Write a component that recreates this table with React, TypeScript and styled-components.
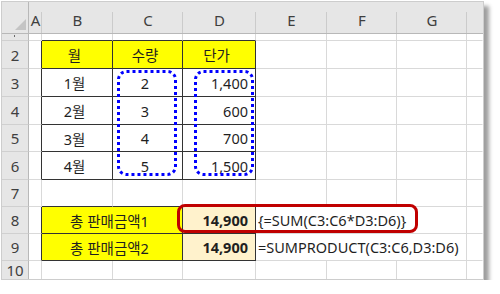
import React from "react";
import styled, { createGlobalStyle } from "styled-components";

const GlobalStyle = createGlobalStyle`
  body {
    margin: 0;
    background: #ffffff;
    font-family: "Noto Sans", "Noto Sans CJK KR", sans-serif;
  }
`;

const COLS = ["A", "B", "C", "D", "E", "F", "G", "H"];
const ROWS = [1, 2, 3, 4, 5, 6, 7, 8, 9, 10];

type Align = "left" | "center" | "right";

type CellSpec = {
  text?: string;
  span?: number;
  align?: Align;
  bg?: string;
  bold?: boolean;
};

const YELLOW = "#ffff00";
const CREAM = "#fff2cc";

// cells keyed by address, everything else is an empty gridline cell
const DATA: Record<string, CellSpec> = {
  B2: { text: "월", align: "center", bg: YELLOW },
  C2: { text: "수량", align: "center", bg: YELLOW },
  D2: { text: "단가", align: "center", bg: YELLOW },
  B3: { text: "1월", align: "center" },
  C3: { text: "2", align: "center" },
  D3: { text: "1,400", align: "right" },
  B4: { text: "2월", align: "center" },
  C4: { text: "3", align: "center" },
  D4: { text: "600", align: "right" },
  B5: { text: "3월", align: "center" },
  C5: { text: "4", align: "center" },
  D5: { text: "700", align: "right" },
  B6: { text: "4월", align: "center" },
  C6: { text: "5", align: "center" },
  D6: { text: "1,500", align: "right" },
  B8: { text: "총 판매금액1", align: "center", bg: YELLOW, span: 2 },
  D8: { text: "14,900", align: "right", bg: CREAM, bold: true },
  E8: { text: "{=SUM(C3:C6*D3:D6)}", align: "left", span: 3 },
  B9: { text: "총 판매금액2", align: "center", bg: YELLOW, span: 2 },
  D9: { text: "14,900", align: "right", bg: CREAM, bold: true },
  E9: { text: "=SUMPRODUCT(C3:C6,D3:D6)", align: "left", span: 3 },
};

const GRID = "#d9d9d9";
const DARK = "#333333";

const inTable = (r: number, c: number) =>
  ((r >= 2 && r <= 6) || (r >= 8 && r <= 9)) && c >= 1 && c <= 3;

const Frame = styled.div`
  margin: 1px 0 0 1px;
  width: 483px;
  height: 279px;
  box-sizing: border-box;
  border: 1px solid #cdcdcd;
  box-shadow: 5px 5px 4px rgba(0, 0, 0, 0.38);
  overflow: hidden;
  background: #fff;
`;

const Sheet = styled.div`
  position: relative;
  display: grid;
  grid-template-columns: 27px 13px 71px 70px 73px 71px 70px 70px 1fr;
  grid-template-rows: 32px 7px 28px 28px 28px 27px 28px 27px 27px 27px 1fr;
  height: 100%;
`;

const Corner = styled.div`
  box-sizing: border-box;
  background: #e6e6e6;
  border-right: 1px solid #b8b8b8;
  border-bottom: 1px solid #b8b8b8;
  display: flex;
  justify-content: flex-end;
  align-items: flex-end;
  padding: 0 2px 3px 0;
`;

const CornerMark = styled.div`
  width: 0;
  height: 0;
  border-left: 11px solid transparent;
  border-bottom: 11px solid #c4c4c4;
`;

const ColHead = styled.div<{ $last?: boolean }>`
  box-sizing: border-box;
  background: ${(p) =>
    p.$last
      ? "#e6e6e6"
      : "linear-gradient(#cbcbcb, #cbcbcb) right bottom / 1px 21px no-repeat, #e6e6e6"};
  border-bottom: 1px solid #b8b8b8;
  display: flex;
  align-items: center;
  justify-content: center;
  padding-top: 4px;
  font-size: 15px;
  color: #3f3f3f;
`;

const RowHead = styled.div`
  box-sizing: border-box;
  background: #e6e6e6;
  border-right: 1px solid #b8b8b8;
  border-bottom: 1px solid #d0d0d0;
  display: flex;
  align-items: center;
  justify-content: center;
  font-size: 15px;
  line-height: 18px;
  color: #3f3f3f;
`;

// row 1 is squeezed so only the tip of its label peeks out
const TinyRowHead = styled(RowHead)`
  align-items: flex-start;
  padding: 1px 1px 0 0;
`;

const LabelTip = styled.span`
  width: 1px;
  height: 2px;
  background: #6a6a6a;
`;

const Cell = styled.div<{
  $span: number;
  $align: Align;
  $bg: string;
  $bold: boolean;
  $right: string;
  $bottom: string;
}>`
  box-sizing: border-box;
  grid-column: span ${(p) => p.$span};
  background: ${(p) => p.$bg};
  border-right: 1px solid ${(p) => p.$right};
  border-bottom: 1px solid ${(p) => p.$bottom};
  display: flex;
  align-items: center;
  justify-content: ${(p) =>
    p.$align === "left" ? "flex-start" : p.$align === "right" ? "flex-end" : "center"};
  padding: 0 7px 0 2px;
  white-space: nowrap;
  overflow: hidden;
  font-size: 14.5px;
  font-weight: ${(p) => (p.$bold ? 700 : 400)};
  color: #1f1f1f;
`;

const DottedMark = styled.svg<{ $x: number; $y: number }>`
  position: absolute;
  left: ${(p) => p.$x}px;
  top: ${(p) => p.$y}px;
  pointer-events: none;
`;

const RedMark = styled.div`
  position: absolute;
  left: 175px;
  top: 202px;
  width: 241px;
  height: 29px;
  box-sizing: border-box;
  border: 3px solid #c00000;
  border-radius: 8px;
  pointer-events: none;
`;

function Dotted(p: { x: number; y: number }) {
  return (
    <DottedMark $x={p.x} $y={p.y} width={60} height={106}>
      <rect
        x={1.5}
        y={1.5}
        width={57}
        height={103}
        rx={8}
        fill="none"
        stroke="#0000ff"
        strokeWidth={3}
        strokeDasharray="3 3"
      />
    </DottedMark>
  );
}

function renderRow(r: number) {
  const out: React.ReactNode[] = [
    r === 1 ? (
      <TinyRowHead key={`h${r}`}>
        <LabelTip />
      </TinyRowHead>
    ) : (
      <RowHead key={`h${r}`}>{r}</RowHead>
    ),
  ];
  let c = 0;
  while (c < COLS.length) {
    const spec = DATA[`${COLS[c]}${r}`] || {};
    const span = spec.span || 1;
    const lastCol = c + span - 1;
    const right =
      inTable(r, lastCol) || inTable(r, lastCol + 1)
        ? DARK
        : lastCol === COLS.length - 1
        ? "transparent"
        : GRID;
    let darkBottom = false;
    for (let k = c; k <= lastCol; k++) {
      if (inTable(r, k) || inTable(r + 1, k)) darkBottom = true;
    }
    out.push(
      <Cell
        key={`${COLS[c]}${r}`}
        $span={span}
        $align={spec.align || "left"}
        $bg={spec.bg || "#ffffff"}
        $bold={!!spec.bold}
        $right={right}
        $bottom={darkBottom ? DARK : GRID}
      >
        {spec.text}
      </Cell>
    );
    c += span;
  }
  return out;
}

export default function App() {
  return (
    <>
      <GlobalStyle />
      <Frame>
        <Sheet>
          <Corner>
            <CornerMark />
          </Corner>
          {COLS.map((k, i) => (
            <ColHead key={k} $last={i === COLS.length - 1}>
              {k === "H" ? "" : k}
            </ColHead>
          ))}
          {ROWS.map((r) => renderRow(r))}
          <Dotted x={115} y={68} />
          <Dotted x={192} y={68} />
          <RedMark />
        </Sheet>
      </Frame>
    </>
  );
}
